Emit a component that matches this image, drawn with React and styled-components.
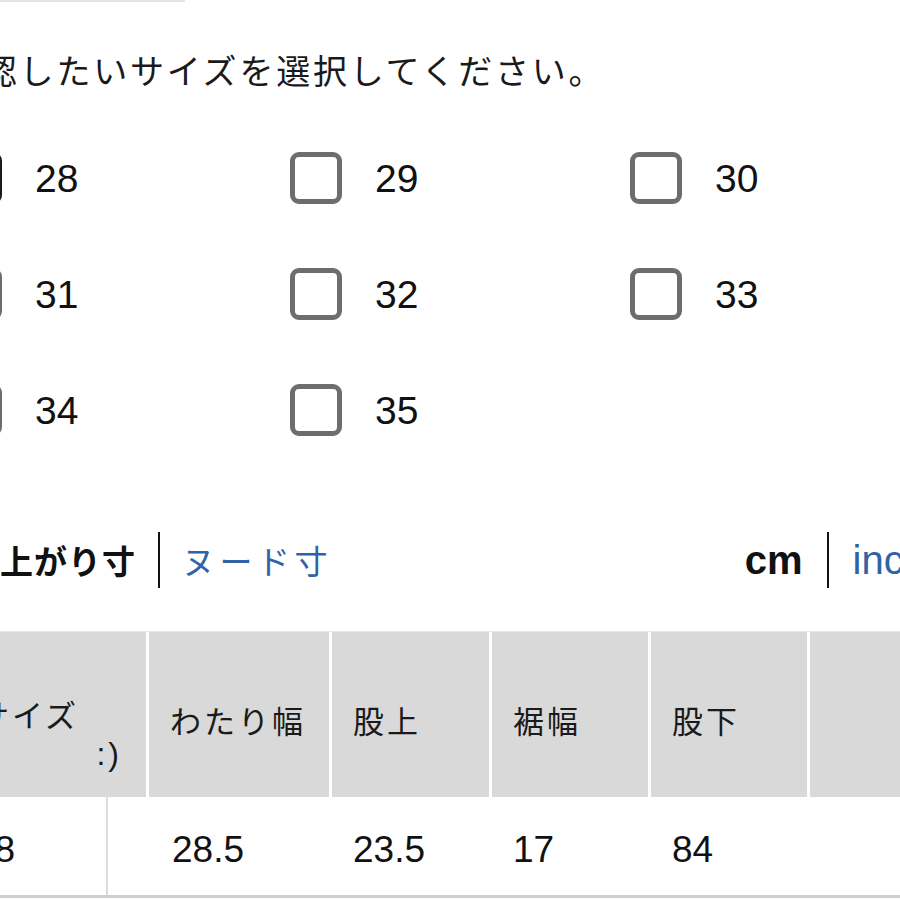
import React from "react";
import styled, { createGlobalStyle } from "styled-components";

const Global = createGlobalStyle`
  html, body { margin: 0; padding: 0; background: #fff; }
  body {
    font-family: "Liberation Sans", "Noto Sans CJK JP", sans-serif;
    color: #111;
  }
`;

const Page = styled.div`
  width: 900px;
  height: 900px;
  overflow: hidden;
  background: #fff;
`;

const TopRule = styled.div`
  width: 185px;
  height: 2px;
  background: #e4e4e4;
`;

// everything is shifted left a little: the screenshot is cropped
const Shift = styled.div`
  margin-left: -50px;
  width: 1000px;
`;

const Prompt = styled.p`
  margin: 48px 0 0 -4px;
  font-size: 34px;
  line-height: 40px;
  letter-spacing: 2.8px;
  font-family: "Noto Sans CJK JP", sans-serif;
  color: #1a1a1a;
`;

const SizeGrid = styled.div`
  display: grid;
  grid-template-columns: repeat(3, 340px);
  row-gap: 64px;
  margin-top: 62px;
`;

const Option = styled.label`
  display: flex;
  align-items: center;
  gap: 33px;
  height: 52px;
`;

const Box = styled.span`
  box-sizing: border-box;
  width: 52px;
  height: 52px;
  border: 5px solid ${(p) => (p.$active ? "#1a1a1a" : "#6d6d6d")};
  border-radius: 9px;
  background: #fff;
`;

const OptionLabel = styled.span`
  font-size: 39px;
  line-height: 1;
  color: #111;
`;

const Tabs = styled.div`
  box-sizing: border-box;
  display: flex;
  justify-content: space-between;
  align-items: center;
  width: 976px;
  height: 56px;
  margin-top: 96px;
  padding-left: 16px;
`;

const TabGroup = styled.div`
  display: flex;
  align-items: center;
  gap: ${(p) => p.$gap || 24}px;
`;

const Tab = styled.span`
  font-family: ${(p) =>
    p.$latin ? `"Liberation Sans", sans-serif` : `"Noto Sans CJK JP", sans-serif`};
  font-size: ${(p) => (p.$latin ? "40px" : "33px")};
  font-weight: ${(p) => (p.$current ? 700 : 400)};
  letter-spacing: ${(p) => (p.$latin ? "0" : p.$current ? "1px" : "4.5px")};
  color: ${(p) => (p.$current ? "#111" : "#2f62a6")};
  line-height: 1;
`;

const Divider = styled.span`
  width: 2px;
  height: 56px;
  background: #111;
`;

const Table = styled.div`
  margin-top: 43px;
  border-top: 1px solid #e6e6e6;
`;

const HeadRow = styled.div`
  display: grid;
  grid-template-columns: 196px 180px 157px 156px 156px 156px;
  column-gap: 3px;
  height: 165px;
  background: #fff;
`;

const HeadCell = styled.div`
  background: #d9d9d9;
  display: flex;
  flex-direction: column;
  justify-content: center;
  padding: 10px 0 0 21px;
  font-family: "Noto Sans CJK JP", sans-serif;
  font-size: 31px;
  letter-spacing: 3px;
  color: #1a1a1a;
`;

const FirstHead = styled(HeadCell)`
  padding: 34px 24px 0 28px;
`;

const HeadNote = styled.span`
  align-self: flex-end;
  margin-top: 0;
  font-family: "Liberation Sans", sans-serif;
  font-size: 32px;
`;

const BodyRow = styled.div`
  display: grid;
  grid-template-columns: 158px 41px 183px 160px 159px 159px 156px;
  height: 98px;
  border-bottom: 3px solid #cfcfcf;
`;

const BodyCell = styled.div`
  display: flex;
  align-items: center;
  padding: 8px 0 0 ${(p) => p.$pad || 21}px;
  font-size: 37px;
  color: #111;
  ${(p) => p.$ruled && "border-right: 2px solid #dcdcdc;"}
`;

const sizes = [28, 29, 30, 31, 32, 33, 34, 35];
const heads = ["わたり幅", "股上", "裾幅", "股下", ""];
const values = ["28.5", "23.5", "17", "84", ""];

export default function App() {
  return (
    <Page>
      <Global />
      <TopRule />
      <Shift>
        <Prompt>確認したいサイズを選択してください。</Prompt>
        <SizeGrid>
          {sizes.map((s) => (
            <Option key={s}>
              <Box $active={s === 28} />
              <OptionLabel>{s}</OptionLabel>
            </Option>
          ))}
        </SizeGrid>
        <Tabs>
          <TabGroup $gap={22}>
            <Tab $current>仕上がり寸</Tab>
            <Divider />
            <Tab>ヌード寸</Tab>
          </TabGroup>
          <TabGroup>
            <Tab $current $latin>cm</Tab>
            <Divider />
            <Tab $latin>inch</Tab>
          </TabGroup>
        </Tabs>
        <Table>
          <HeadRow>
            <FirstHead>
              サイズ
              <HeadNote>:)</HeadNote>
            </FirstHead>
            {heads.map((h, i) => (
              <HeadCell key={i}>{h}</HeadCell>
            ))}
          </HeadRow>
          <BodyRow>
            <BodyCell $ruled $pad={24}>28</BodyCell>
            <BodyCell />
            {values.map((v, i) => (
              <BodyCell key={i} $pad={i === 0 ? 23 : 21}>
                {v}
              </BodyCell>
            ))}
          </BodyRow>
        </Table>
      </Shift>
    </Page>
  );
}
